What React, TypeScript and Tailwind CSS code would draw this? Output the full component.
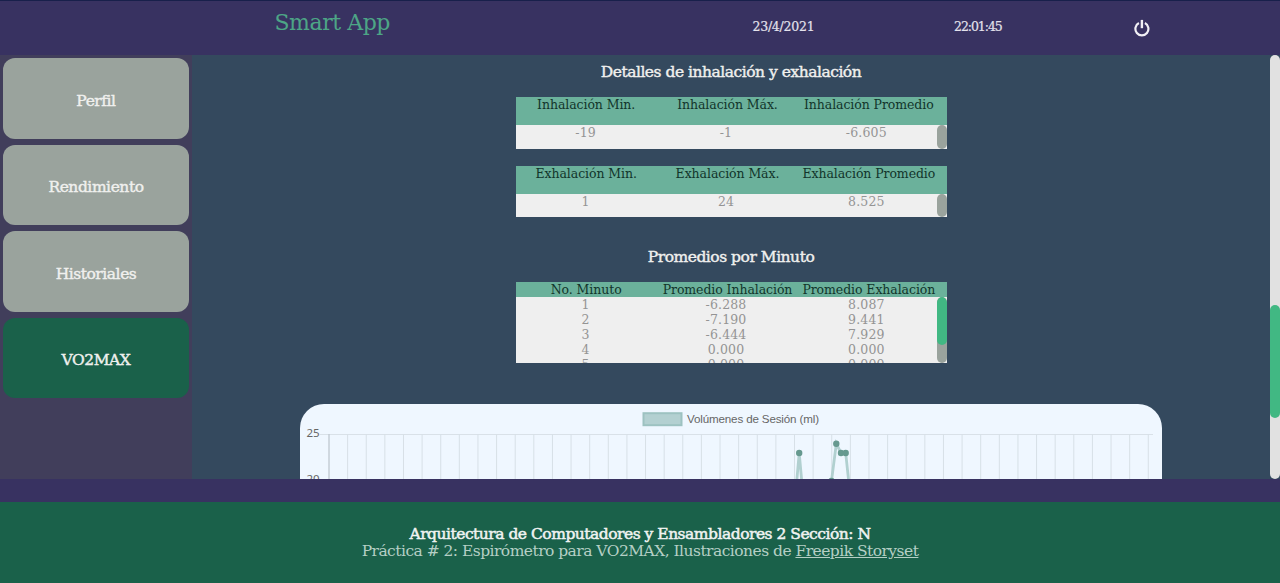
import React from "react";

type Row = [string, string, string];

function NavButton({ label, active }: { label: string; active?: boolean }) {
  return (
    <button
      className={
        "flex h-[80.5px] w-[186px] shrink-0 items-center justify-center rounded-[12px] pt-[5px] text-[15.5px] leading-4 font-normal tracking-[-0.45px] text-[#f0f0ee] [-webkit-text-stroke:0.4px_#f0f0ee] " +
        (active ? "bg-[#1a614a]" : "bg-[#9aa39d]")
      }
    >
      {label}
    </button>
  );
}

function SectionTitle({ children }: { children: React.ReactNode }) {
  return (
    <h2 className="h-[35px] text-[15.5px] leading-5 tracking-[-0.48px] text-[#f0f0ee] [-webkit-text-stroke:0.4px_#f0f0ee]">
      {children}
    </h2>
  );
}

function DataTable({
  head,
  rows,
  headClass,
  bodyClass,
  thumb,
}: {
  head: string[];
  rows: Row[];
  headClass: string;
  bodyClass: string;
  thumb?: boolean;
}) {
  return (
    <div className="w-[431px]">
      <div
        className={
          "flex bg-[#6bb19b] pr-[7px] text-[12.5px] leading-[15px] tracking-[-0.08px] text-[#12352b] " + headClass
        }
      >
        {head.map((h) => (
          <div key={h} className="w-1/3 text-center whitespace-nowrap">
            {h}
          </div>
        ))}
      </div>
      <div className={"flex overflow-hidden bg-[#efefef] " + bodyClass}>
        <div className="flex-1">
          {rows.map((r) => (
            <div key={r[0]} className="flex text-[12.5px] leading-[15px] tracking-[0.15px] text-[#949494]">
              {r.map((c, j) => (
                <div key={j} className="w-1/3 text-center">
                  {c}
                </div>
              ))}
            </div>
          ))}
        </div>
        <div className="h-full w-[10px] overflow-hidden rounded-[5px] bg-[#9aa39d]">
          {thumb && <div className="h-[48px] rounded-[5px] bg-[#41b883]" />}
        </div>
      </div>
    </div>
  );
}

function Chart() {
  const lines = Array.from({ length: 44 }, (_, i) => 29 + (i + 1) * 18.62);
  return (
    <svg width="862" height="75" viewBox="0 0 862 75" className="block">
      <rect x="343.5" y="9.2" width="38" height="12" fill="#b3d0d1" stroke="#9dc2c1" strokeWidth="2" />
      <text x="387" y="18.5" fontSize="11.6" fontFamily="Liberation Sans, sans-serif" fill="#666" textLength="132">
        Volúmenes de Sesión (ml)
      </text>
      <g fontSize="11.5" fontFamily="Noto Sans, sans-serif" fill="#666">
        <text x="6.5" y="33">25</text>
        <text x="6.5" y="79">20</text>
      </g>
      <path d="M19 30.5H853" stroke="#d9e1e8" />
      <path d="M29 30V75" stroke="#bfc8cf" strokeWidth="1.3" />
      {lines.map((x) => (
        <path key={x} d={`M${x} 30V75`} stroke="#d7e0e7" />
      ))}
      <path
        d="M496.5 80L499.2 49L502 80M529 90L531.5 77L536.3 39.7L541 49L545.7 49L549 80"
        fill="none"
        stroke="#b1d0d0"
        strokeWidth="2.8"
      />
      <g fill="#66998f">
        <circle cx="499.2" cy="49" r="3.2" />
        <circle cx="536.3" cy="39.7" r="3.2" />
        <circle cx="541" cy="49" r="3.2" />
        <circle cx="545.7" cy="49" r="3.2" />
        <circle cx="531.5" cy="77" r="3.2" />
      </g>
    </svg>
  );
}

export default function App() {
  return (
    <div className="flex h-[583px] w-[1280px] flex-col overflow-hidden bg-[#383261] font-['DejaVu_Serif',serif]">
      <header className="flex h-[55px] shrink-0 border-t border-[#18204b] text-[#e4e2ec]">
        <div className="ml-[274.5px] w-[478px] pt-[8px] text-[22px] leading-7 tracking-[-0.45px] text-[#4da586]">
          Smart App
        </div>
        <div className="w-[201.5px] pt-[18px] text-[12.5px] leading-4 tracking-[-0.25px] [-webkit-text-stroke:0.2px_#e4e2ec]">
          23/4/2021
        </div>
        <div className="w-[180px] pt-[18px] text-[12.5px] leading-4 tracking-[-1.05px] [-webkit-text-stroke:0.2px_#e4e2ec]">
          22:01:45
        </div>
        <svg
          className="mt-[18px]"
          width="16"
          height="19"
          viewBox="0 0 16 19"
          fill="none"
          stroke="#f1f0f5"
          strokeWidth="2.2"
        >
          <path d="M4.9 4.1A6.5 6.5 0 1 0 10.9 4.1" />
          <path d="M7.9 0.9V9.2" strokeWidth="2.4" />
        </svg>
      </header>

      <div className="flex h-[424px] shrink-0">
        <nav className="flex w-[192px] shrink-0 flex-col gap-[6px] bg-[#413e5b] px-[3px] pt-[3px]">
          <NavButton label="Perfil" />
          <NavButton label="Rendimiento" />
          <NavButton label="Historiales" />
          <NavButton active label="VO2MAX" />
        </nav>

        <main className="flex h-full w-[1078px] flex-col items-center overflow-hidden bg-[#34495e] pt-[7px]">
          <SectionTitle>Detalles de inhalación y exhalación</SectionTitle>
          <DataTable
            head={["Inhalación Min.", "Inhalación Máx.", "Inhalación Promedio"]}
            rows={[["-19", "-1", "-6.605"]]}
            headClass="h-[28px]"
            bodyClass="h-[24px]"
          />
          <div className="h-[17px] shrink-0" />
          <DataTable
            head={["Exhalación Min.", "Exhalación Máx.", "Exhalación Promedio"]}
            rows={[["1", "24", "8.525"]]}
            headClass="h-[28px]"
            bodyClass="h-[23px]"
          />
          <div className="h-[30px] shrink-0" />
          <SectionTitle>Promedios por Minuto</SectionTitle>
          <DataTable
            head={["No. Minuto", "Promedio Inhalación", "Promedio Exhalación"]}
            rows={[
              ["1", "-6.288", "8.087"],
              ["2", "-7.190", "9.441"],
              ["3", "-6.444", "7.929"],
              ["4", "0.000", "0.000"],
              ["5", "0.000", "0.000"],
            ]}
            headClass="h-[15px]"
            bodyClass="h-[66px]"
            thumb
          />
          <div className="mt-[41px] h-[75px] w-[862px] shrink-0 overflow-hidden rounded-t-[24px] bg-[#eff7ff]">
            <Chart />
          </div>
        </main>

        <div className="w-[10px] bg-[#34495e]">
          <div className="h-full rounded-[5px] bg-[#e1e1e1] pt-[250px]">
            <div className="h-[113px] rounded-[5px] bg-[#41b883]" />
          </div>
        </div>
      </div>

      <footer className="mt-[23px] flex h-[81px] shrink-0 flex-col items-center bg-[#1a614a] pt-[24px] text-[15.5px] leading-[17px]">
        <p className="tracking-[-0.49px] whitespace-nowrap text-[#f0f3f1] [-webkit-text-stroke:0.5px_#f0f3f1]">
          Arquitectura de Computadores y Ensambladores 2 Sección: N
        </p>
        <p className="tracking-[-0.53px] whitespace-nowrap text-[#b5cfc5]">
          Práctica # 2: Espirómetro para VO2MAX, Ilustraciones de <a className="underline">Freepik Storyset</a>
        </p>
      </footer>
    </div>
  );
}
